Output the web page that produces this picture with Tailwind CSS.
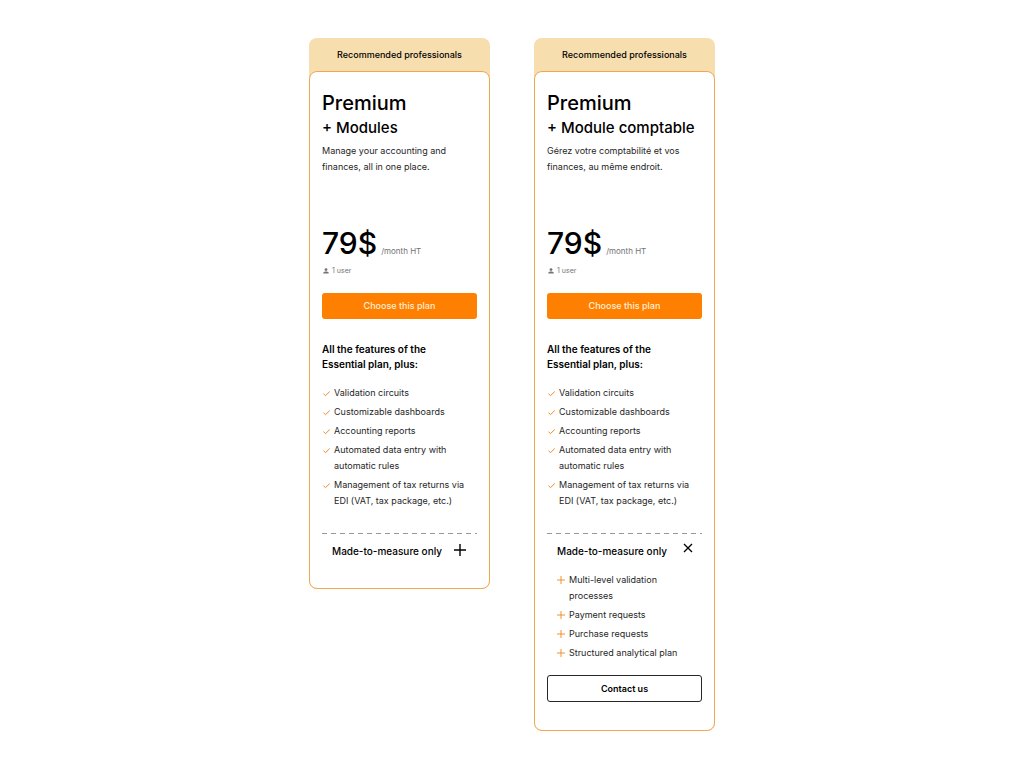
<!DOCTYPE html>
<html lang="en">
<head>
  <meta charset="UTF-8">
  <meta name="viewport" content="width=device-width, initial-scale=1.0">
  <title>Premium plans</title>
  <script src="https://cdn.jsdelivr.net/npm/@tailwindcss/browser@4"></script>
</head>
<body class="bg-white text-black font-['Inter',sans-serif]">

<!-- Shared icons -->
<svg class="hidden">
  <symbol id="check" viewBox="0 0 8 8"><path d="M1.500 4.800 3.500 6.600 7.800 2.500" fill="none" stroke="currentColor" stroke-width="1"/></symbol>
  <symbol id="plus" viewBox="0 0 12 12"><path d="M6 0v12M0 6h12" fill="none" stroke="currentColor" stroke-width="1.4"/></symbol>
  <symbol id="close" viewBox="0 0 10 10"><path d="m1 1 8 8M9 1 1 9" fill="none" stroke="currentColor" stroke-width="1.3"/></symbol>
  <symbol id="user" viewBox="0 0 6 6"><circle cx="3" cy="1.6" r="1.4" fill="currentColor"/><path d="M.3 5.6V5c0-1 1.200-1.500 2.700-1.500S5.700 4 5.700 5v.6z" fill="currentColor"/></symbol>
</svg>

<main class="flex flex-wrap justify-center items-start gap-11 pt-[38px] pb-8">

  <section class="w-[181px] rounded-lg bg-[#f7deaf]">
    <p class="h-[33px] flex items-center justify-center text-[9px] font-medium">Recommended professionals</p>
    <div class="rounded-lg border border-[#f2a650] bg-white px-3 pt-[17px] pb-7">
      <h2 class="text-xl leading-7 font-medium">Premium</h2>
      <h3 class="text-[15px] leading-[22px] font-medium whitespace-nowrap">+ Modules</h3>
      <p class="mt-1 text-[9px] leading-4 text-neutral-800">Manage your accounting and<br>finances, all in one place.</p>
      <p class="mt-12 flex items-baseline gap-1">
        <span class="text-[30px] leading-10 font-medium">79$</span>
        <span class="text-[8px] leading-3 text-neutral-500">/month HT</span>
      </p>
      <p class="mt-0.5 flex items-center gap-[3px] pl-px text-[7px] leading-3 text-neutral-500">
        <svg class="size-[6px]"><use href="#user"/></svg>1 user
      </p>
      <button class="mt-4 h-[26px] w-full rounded-[3px] bg-[#ff7f00] text-[9px] font-medium text-[#fff0d8]">Choose this plan</button>
      <h4 class="mt-[23px] text-[10px] leading-[15px] font-semibold">All the features of the<br>Essential plan, plus:</h4>
      <ul class="mt-[13px] flex flex-col gap-[3px] text-[9px] leading-4 text-neutral-800 whitespace-nowrap">
        <li class="flex gap-1"><svg class="mt-1 size-2 shrink-0 text-[#f08a24]"><use href="#check"/></svg>Validation circuits</li>
        <li class="flex gap-1"><svg class="mt-1 size-2 shrink-0 text-[#f08a24]"><use href="#check"/></svg>Customizable dashboards</li>
        <li class="flex gap-1"><svg class="mt-1 size-2 shrink-0 text-[#f08a24]"><use href="#check"/></svg>Accounting reports</li>
        <li class="flex gap-1"><svg class="mt-1 size-2 shrink-0 text-[#f08a24]"><use href="#check"/></svg><span>Automated data entry with<br>automatic rules</span></li>
        <li class="flex gap-1"><svg class="mt-1 size-2 shrink-0 text-[#f08a24]"><use href="#check"/></svg><span>Management of tax returns via<br>EDI (VAT, tax package, etc.)</span></li>
      </ul>
      <div class="mt-6 h-px bg-[repeating-linear-gradient(to_right,#999_0_5px,transparent_5px_9px)]"></div>
      <button class="mt-2 flex w-full items-start gap-3 pl-[10px] text-[10px] leading-[18px] font-medium whitespace-nowrap" aria-expanded="false">
        Made-to-measure only
        <svg class="mt-0.5 size-3 shrink-0"><use href="#plus"/></svg>
      </button>
    </div>
  </section>

  <section class="w-[181px] rounded-lg bg-[#f7deaf]">
    <p class="h-[33px] flex items-center justify-center text-[9px] font-medium">Recommended professionals</p>
    <div class="rounded-lg border border-[#f2a650] bg-white px-3 pt-[17px] pb-7">
      <h2 class="text-xl leading-7 font-medium">Premium</h2>
      <h3 class="text-[15px] leading-[22px] font-medium whitespace-nowrap">+ Module comptable</h3>
      <p class="mt-1 text-[9px] leading-4 text-neutral-800" lang="fr">Gérez votre comptabilité et vos<br>finances, au même endroit.</p>
      <p class="mt-12 flex items-baseline gap-1">
        <span class="text-[30px] leading-10 font-medium">79$</span>
        <span class="text-[8px] leading-3 text-neutral-500">/month HT</span>
      </p>
      <p class="mt-0.5 flex items-center gap-[3px] pl-px text-[7px] leading-3 text-neutral-500">
        <svg class="size-[6px]"><use href="#user"/></svg>1 user
      </p>
      <button class="mt-4 h-[26px] w-full rounded-[3px] bg-[#ff7f00] text-[9px] font-medium text-[#fff0d8]">Choose this plan</button>
      <h4 class="mt-[23px] text-[10px] leading-[15px] font-semibold">All the features of the<br>Essential plan, plus:</h4>
      <ul class="mt-[13px] flex flex-col gap-[3px] text-[9px] leading-4 text-neutral-800 whitespace-nowrap">
        <li class="flex gap-1"><svg class="mt-1 size-2 shrink-0 text-[#f08a24]"><use href="#check"/></svg>Validation circuits</li>
        <li class="flex gap-1"><svg class="mt-1 size-2 shrink-0 text-[#f08a24]"><use href="#check"/></svg>Customizable dashboards</li>
        <li class="flex gap-1"><svg class="mt-1 size-2 shrink-0 text-[#f08a24]"><use href="#check"/></svg>Accounting reports</li>
        <li class="flex gap-1"><svg class="mt-1 size-2 shrink-0 text-[#f08a24]"><use href="#check"/></svg><span>Automated data entry with<br>automatic rules</span></li>
        <li class="flex gap-1"><svg class="mt-1 size-2 shrink-0 text-[#f08a24]"><use href="#check"/></svg><span>Management of tax returns via<br>EDI (VAT, tax package, etc.)</span></li>
      </ul>
      <div class="mt-6 h-px bg-[repeating-linear-gradient(to_right,#999_0_5px,transparent_5px_9px)]"></div>
      <button class="mt-2 flex w-full items-start justify-between pl-[10px] pr-[9px] text-[10px] leading-[18px] font-medium whitespace-nowrap" aria-expanded="true">
        Made-to-measure only
        <svg class="mt-px size-[10px] shrink-0"><use href="#close"/></svg>
      </button>
      <ul class="mt-3 flex flex-col gap-[3px] pl-[10px] text-[9px] leading-4 text-neutral-800 whitespace-nowrap">
        <li class="flex gap-1"><svg class="mt-1 size-2 shrink-0 text-[#f08a24]"><use href="#plus"/></svg><span>Multi-level validation<br>processes</span></li>
        <li class="flex gap-1"><svg class="mt-1 size-2 shrink-0 text-[#f08a24]"><use href="#plus"/></svg>Payment requests</li>
        <li class="flex gap-1"><svg class="mt-1 size-2 shrink-0 text-[#f08a24]"><use href="#plus"/></svg>Purchase requests</li>
        <li class="flex gap-1"><svg class="mt-1 size-2 shrink-0 text-[#f08a24]"><use href="#plus"/></svg>Structured analytical plan</li>
      </ul>
      <button class="mt-[14px] h-[27px] w-full rounded-[3px] border border-neutral-800 text-[9px] font-semibold">Contact us</button>
    </div>
  </section>

</main>
</body>
</html>
